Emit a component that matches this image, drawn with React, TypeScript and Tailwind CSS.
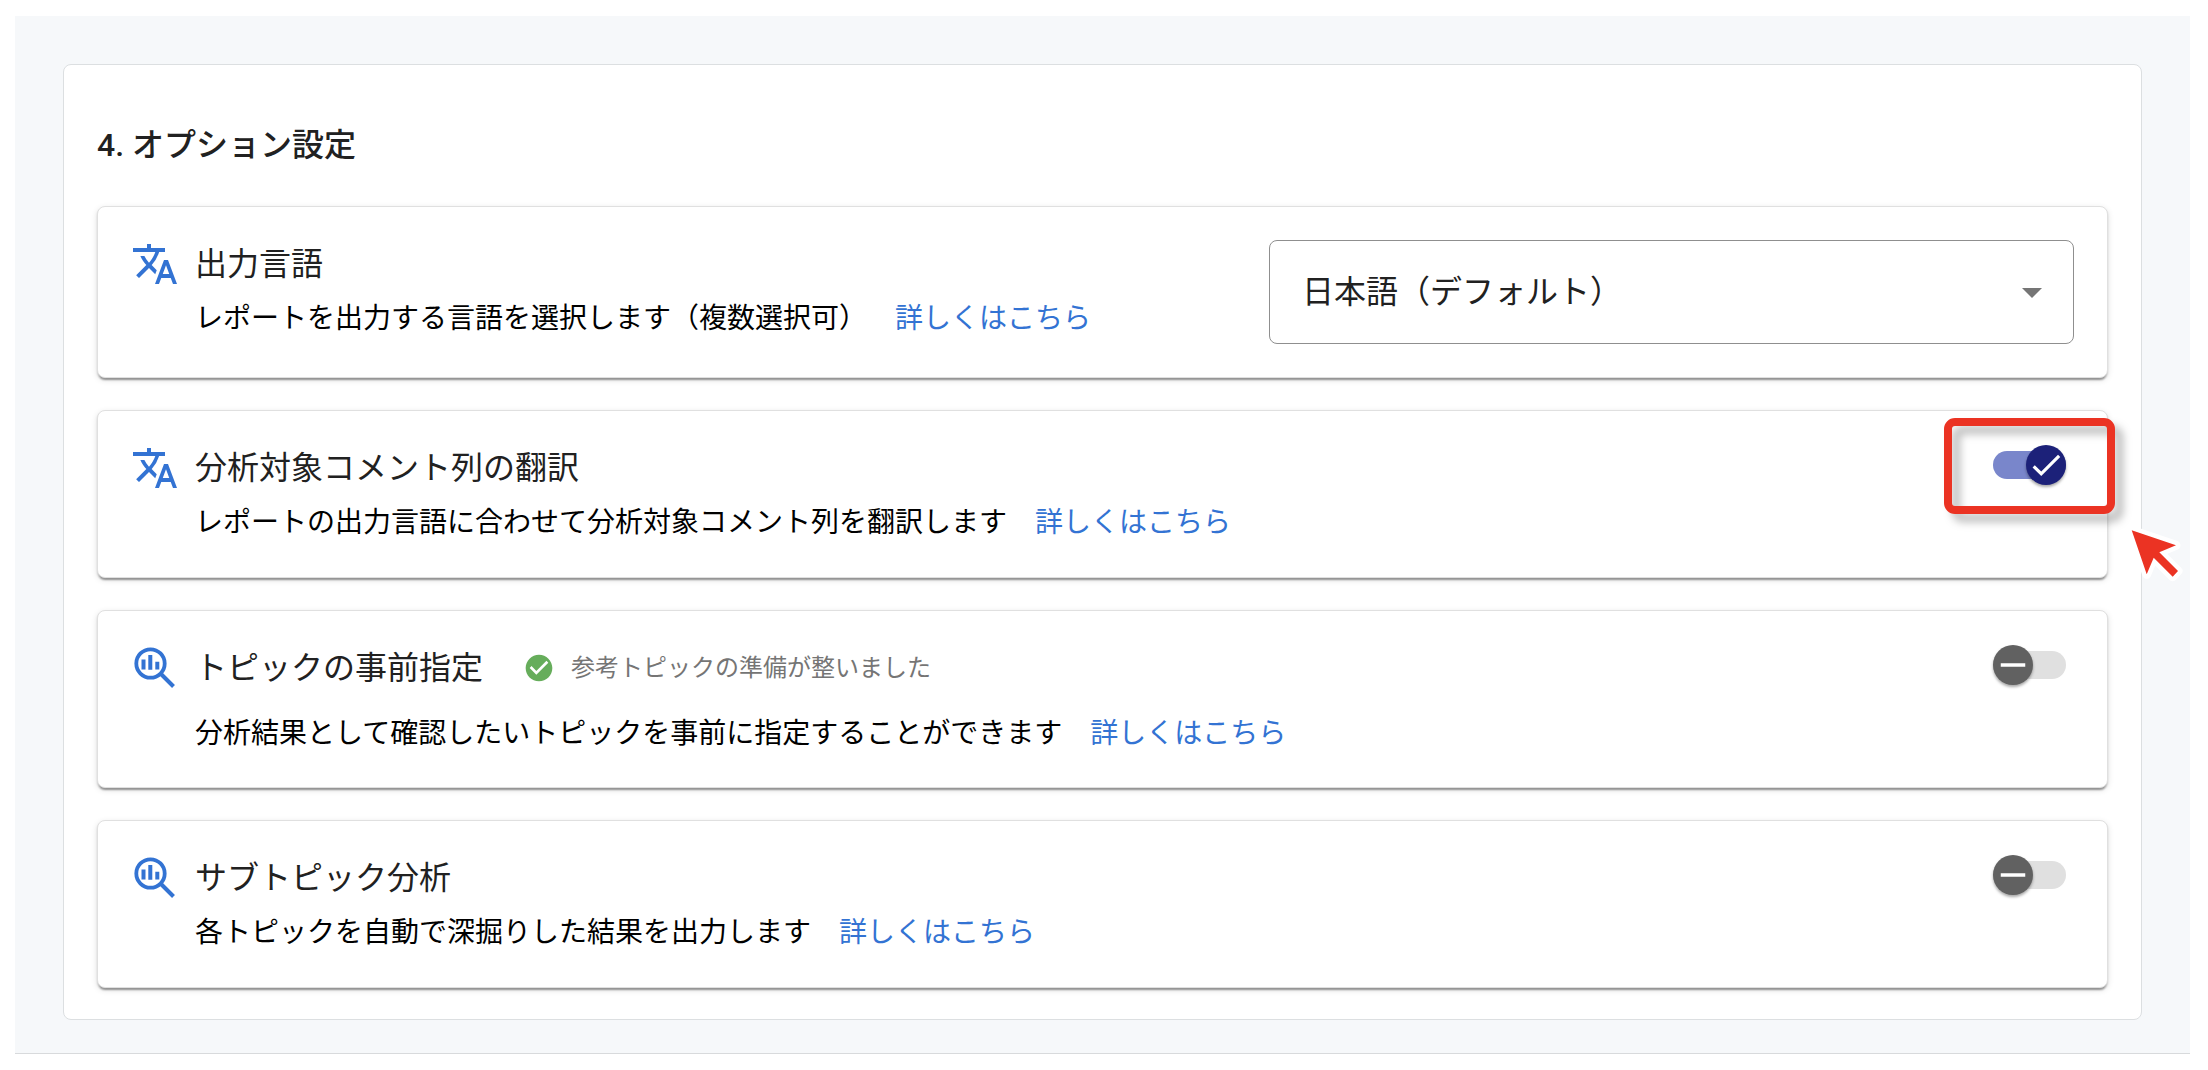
import { useId, useState } from "react";
import type { ReactNode } from "react";
import { MdArrowDropDown, MdCheckCircle, MdTranslate } from "react-icons/md";

function InsightIcon() {
  return (
    <svg viewBox="0 0 48 48" className="size-12" fill="none" aria-hidden="true">
      <circle cx="19.5" cy="19.5" r="14.2" stroke="currentColor" strokeWidth="3.8" />
      <path d="M29.5 29.5 42.5 42.5" stroke="currentColor" strokeWidth="4" />
      <path d="M10.5 15.5h4v10h-4zM17.3 11h4v14.7h-4zM24.3 17.7h4v7.8h-4z" fill="currentColor" />
    </svg>
  );
}

interface ToggleProps {
  label: string;
  defaultChecked?: boolean;
  children?: ReactNode;
}

function Toggle({ label, defaultChecked = false, children }: ToggleProps) {
  const [checked, setChecked] = useState(defaultChecked);

  return (
    <div className="relative mt-px mr-2 h-10 w-[73px] shrink-0">
      <input
        type="checkbox"
        role="switch"
        aria-label={label}
        checked={checked}
        onChange={(e) => setChecked(e.target.checked)}
        className="peer absolute inset-x-0 top-[6px] h-7 cursor-pointer appearance-none rounded-full bg-[#e0e0e0] checked:bg-[#7986cb]"
      />
      <span className="pointer-events-none absolute top-0 left-0 flex size-10 items-center justify-center rounded-full bg-[#616161] text-white shadow-[0_2px_3px_rgba(0,0,0,0.35)] peer-checked:right-0 peer-checked:left-auto peer-checked:bg-[#1c2179]">
        {checked ? (
          <svg viewBox="0 0 24 24" className="size-[38px]" fill="currentColor" aria-hidden="true">
            <path d="M21 7 9 19l-5.5-5.5 1.41-1.41L9 16.17 19.59 5.59 21 7z" />
          </svg>
        ) : (
          <svg viewBox="0 0 24 24" className="size-[42px] shrink-0" fill="currentColor" aria-hidden="true">
            <path d="M19 13H5v-2h14v2z" />
          </svg>
        )}
      </span>
      {children}
    </div>
  );
}

/* Red frame and pointer that call out the translation switch */
function Highlight() {
  return (
    <>
      <div className="pointer-events-none absolute -top-[27px] -left-[49px] h-24 w-[171px] rounded-[11px] border-8 border-[#eb3323] drop-shadow-[8px_8px_4px_rgba(0,0,0,0.27)]" />
      <svg
        viewBox="0 0 60 60"
        className="pointer-events-none absolute top-[79px] left-[132px] size-[60px]"
        aria-hidden="true"
      >
        <path
          d="M6.7 6.3 51 21.3 34.3 28.3 53 47 47.7 52.7 28.7 33.7 21.7 50.3z"
          fill="#eb3323"
          stroke="#fff"
          strokeWidth="9"
          strokeLinejoin="round"
          paintOrder="stroke"
        />
      </svg>
    </>
  );
}

interface OptionCardProps {
  icon: ReactNode;
  title: string;
  titleId?: string;
  description: string;
  status?: string;
  control: ReactNode;
}

function OptionCard({ icon, title, titleId, description, status, control }: OptionCardProps) {
  return (
    <section className="grid grid-cols-12 gap-2 rounded-lg border border-[#e0e0e0] bg-white p-[33px] shadow-[0_4px_2px_-2px_rgba(0,0,0,0.28),0_2px_2px_0_rgba(0,0,0,0.14),0_2px_6px_0_rgba(0,0,0,0.12)]">
      <div className="col-span-7 flex gap-4">
        <div className="shrink-0 text-[#3373d3]">{icon}</div>
        <div className={status ? "" : "pb-px"}>
          <div className="flex h-12 items-center gap-10 whitespace-nowrap">
            <h3 id={titleId} className="text-[32px] leading-12 text-[#212121]">
              {title}
            </h3>
            {status && (
              <p className="flex items-center gap-4 text-2xl text-[#757575]">
                <MdCheckCircle className="size-8 text-[#66ad5b]" aria-hidden="true" />
                {status}
              </p>
            )}
          </div>
          <p
            className={`text-[28px] leading-10 whitespace-nowrap text-black ${status ? "mt-[22px]" : "mt-[11px]"}`}
          >
            {description}
            <a href="#" className="ml-7 text-[#3373d3]">
              詳しくはこちら
            </a>
          </p>
        </div>
      </div>
      <div className="col-span-5 flex items-start justify-end">{control}</div>
    </section>
  );
}

function LanguageSelect({ labelledBy }: { labelledBy: string }) {
  return (
    <div className="relative w-full">
      <select
        aria-labelledby={labelledBy}
        className="h-[104px] w-full appearance-none rounded-lg border border-[#8f8f8f] bg-white pr-20 pl-8 text-[32px] text-[#212121]"
      >
        <option>日本語（デフォルト）</option>
      </select>
      <MdArrowDropDown
        className="pointer-events-none absolute top-7 right-[18px] size-12 text-[#757575]"
        aria-hidden="true"
      />
    </div>
  );
}

export default function App() {
  const languageId = useId();

  return (
    <div className="min-h-screen bg-white pt-4 pr-[18px] pl-[15px] font-[Roboto,'Noto_Sans_CJK_JP',sans-serif]" lang="ja">
      <main className="border-b border-[#d8dadc] bg-[#f6f8fa] px-12 pt-12 pb-[33px]">
        <div className="rounded-lg border border-[#dcdfe1] bg-white px-[33px] pt-14 pb-[31px]">
          <h2 className="text-[32px] leading-12 font-medium text-[#212121]">4. オプション設定</h2>
          <div className="mt-[37px] flex flex-col gap-8">
            <OptionCard
              icon={<MdTranslate className="size-12" aria-hidden="true" />}
              title="出力言語"
              titleId={languageId}
              description="レポートを出力する言語を選択します（複数選択可）"
              control={<LanguageSelect labelledBy={languageId} />}
            />
            <OptionCard
              icon={<MdTranslate className="size-12" aria-hidden="true" />}
              title="分析対象コメント列の翻訳"
              description="レポートの出力言語に合わせて分析対象コメント列を翻訳します"
              control={
                <Toggle label="分析対象コメント列の翻訳" defaultChecked>
                  <Highlight />
                </Toggle>
              }
            />
            <OptionCard
              icon={<InsightIcon />}
              title="トピックの事前指定"
              description="分析結果として確認したいトピックを事前に指定することができます"
              status="参考トピックの準備が整いました"
              control={<Toggle label="トピックの事前指定" />}
            />
            <OptionCard
              icon={<InsightIcon />}
              title="サブトピック分析"
              description="各トピックを自動で深掘りした結果を出力します"
              control={<Toggle label="サブトピック分析" />}
            />
          </div>
        </div>
      </main>
    </div>
  );
}
